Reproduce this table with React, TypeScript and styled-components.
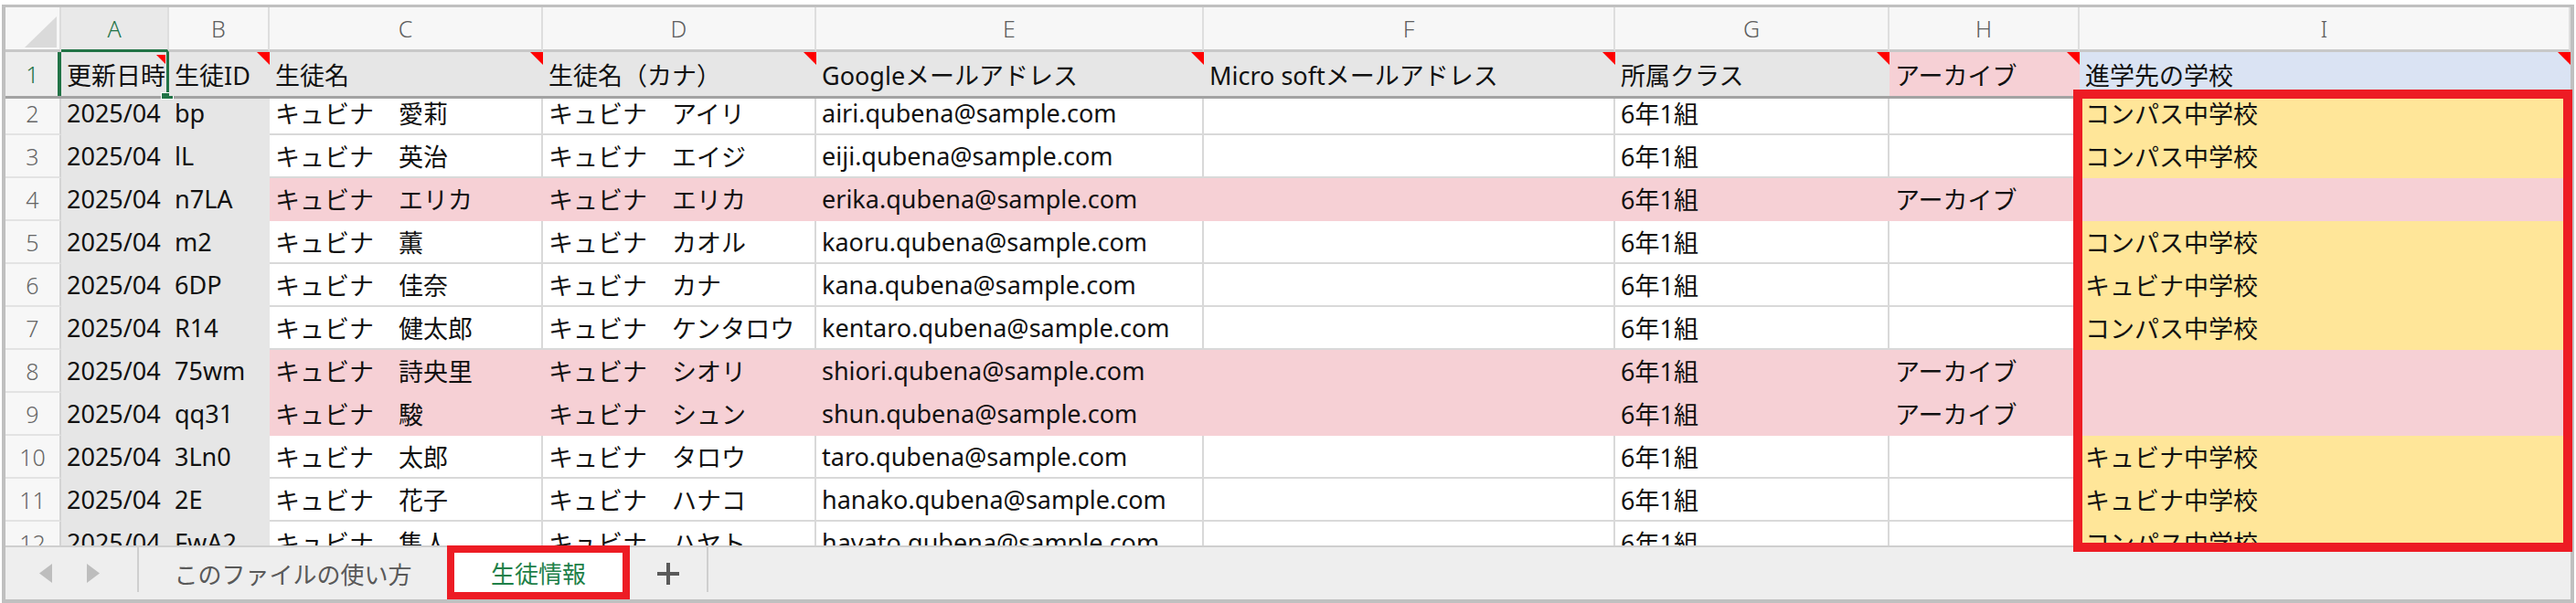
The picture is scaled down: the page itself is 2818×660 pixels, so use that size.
import React from 'react';
import styled, { createGlobalStyle } from 'styled-components';

const COLS = '61px 118px 110px 299px 299px 424px 450px 300px 208px 537px';
const FONT = `"Noto Sans", "Noto Sans CJK JP", sans-serif`;

const GRAY = '#e6e6e6';
const PINK = '#f6d0d5';
const YELLOW = '#ffe699';
const BLUE = '#dae3f3';
const LINE = '#d9d9d9';
const GREEN = '#217346';
const RED = '#ed1c24';

const GlobalStyle = createGlobalStyle`
  html, body { margin: 0; padding: 0; background: #ffffff; }
  body { font-family: ${FONT}; color: #111111; }
  *, *::before, *::after { box-sizing: border-box; }
`;

const Frame = styled.div`
  position: relative;
  margin: 5px 0 0 2px;
  width: 2814px;
  height: 655px;
  border: 4px solid #c0c0c0;
  border-top-width: 3px;
  display: flex;
  flex-direction: column;
  background: #ffffff;
`;

const GridRow = styled.div<{ $h: number }>`
  display: grid;
  grid-template-columns: ${COLS};
  height: ${(p) => p.$h}px;
  flex: none;
`;

const HeaderRow = styled(GridRow)`
  border-bottom: 3px solid #a3a3a3;
`;

const Corner = styled.div`
  display: flex;
  align-items: flex-end;
  justify-content: flex-end;
  padding: 0 3px 2px 0;
  background: #f7f7f7;
  border-right: 2px solid #dcdcdc;
  border-bottom: 3px solid #c8c8c8;
`;

const ColLetter = styled.div<{ $active?: boolean }>`
  display: flex;
  align-items: center;
  justify-content: center;
  font-family: "Noto Sans", sans-serif;
  font-weight: 300;
  font-size: 25px;
  color: ${(p) => (p.$active ? GREEN : '#5e5e5e')};
  background: ${(p) => (p.$active ? '#e9e9e9' : '#f7f7f7')};
  border-right: 2px solid #dedede;
  border-bottom: 3px solid ${(p) => (p.$active ? GREEN : '#c8c8c8')};
`;

const RowNum = styled.div<{ $active?: boolean; $line?: boolean }>`
  display: flex;
  align-items: center;
  justify-content: center;
  font-family: "Noto Sans", sans-serif;
  font-weight: 300;
  font-size: 25px;
  color: ${(p) => (p.$active ? GREEN : '#666666')};
  background: ${(p) => (p.$active ? '#ededed' : '#f7f7f7')};
  border-right: 2px solid #d4d4d4;
  border-bottom: ${(p) => (p.$line ? '2px solid #e3e3e3' : 'none')};
`;

const HeadCell = styled.div<{ $fill: string }>`
  position: relative;
  display: flex;
  align-items: center;
  padding-left: 6px;
  font-size: 27px;
  white-space: nowrap;
  background: ${(p) => p.$fill};
`;

const CommentMark = styled.span<{ $size?: number; $inset?: number }>`
  position: absolute;
  top: ${(p) => (p.$inset ? 3 : 0)}px;
  right: ${(p) => p.$inset ?? 0}px;
  width: 0;
  height: 0;
  border-top: ${(p) => p.$size ?? 14}px solid #ff0000;
  border-left: ${(p) => p.$size ?? 14}px solid transparent;
`;

const Selection = styled.span`
  position: absolute;
  top: 0;
  bottom: 0;
  left: -4px;
  right: -2px;
  border-left: 4px solid ${GREEN};
  border-right: 5px solid ${GREEN};
  pointer-events: none;
`;

const FillHandle = styled.span`
  position: absolute;
  right: -7px;
  bottom: -3px;
  width: 12px;
  height: 6px;
  background: ${GREEN};
  outline: 1px solid #ffffff;
`;

const Viewport = styled.div`
  flex: 1;
  overflow: hidden;
`;

const RowStack = styled.div`
  margin-top: -7px;
`;

const Cell = styled.div<{ $fill?: string }>`
  display: flex;
  align-items: center;
  padding-left: 6px;
  font-size: 27px;
  white-space: nowrap;
  overflow: hidden;
  background: ${(p) => p.$fill ?? '#ffffff'};
  border-right: 2px solid ${(p) => p.$fill ?? LINE};
  border-bottom: 2px solid ${(p) => p.$fill ?? LINE};
`;

const TabBar = styled.div`
  flex: none;
  height: 59px;
  display: flex;
  align-items: stretch;
  background: #eeeeee;
  border-top: 2px solid #cfcfcf;
`;

const Nav = styled.div`
  width: 144px;
  display: flex;
  align-items: center;
  gap: 38px;
  padding-left: 37px;
`;

const Separator = styled.div`
  width: 2px;
  background: #cfcfcf;
  margin-bottom: 8px;
`;

const Tab = styled.div<{ $active?: boolean; $w: number }>`
  width: ${(p) => p.$w}px;
  display: flex;
  align-items: center;
  justify-content: center;
  font-size: 26px;
  color: ${(p) => (p.$active ? '#1e8048' : '#595959')};
  background: ${(p) => (p.$active ? '#ffffff' : 'transparent')};
  border: ${(p) => (p.$active ? `8px solid ${RED}` : 'none')};
  margin-top: ${(p) => (p.$active ? -2 : 0)}px;
  height: ${(p) => (p.$active ? 'calc(100% + 2px)' : 'auto')};
`;

const AddTab = styled.div`
  width: 84px;
  display: flex;
  align-items: center;
  justify-content: center;
`;

const Highlight = styled.div`
  position: absolute;
  left: 2262px;
  top: 90px;
  width: 546px;
  height: 506px;
  border: 10px solid ${RED};
  pointer-events: none;
`;

type Row = {
  n: number;
  id: string;
  name: string;
  kana: string;
  mail: string;
  archived?: boolean;
  school?: string;
};

const rows: Row[] = [
  { n: 2, id: 'bp', name: 'キュビナ　愛莉', kana: 'キュビナ　アイリ', mail: 'airi.qubena@sample.com', school: 'コンパス中学校' },
  { n: 3, id: 'lL', name: 'キュビナ　英治', kana: 'キュビナ　エイジ', mail: 'eiji.qubena@sample.com', school: 'コンパス中学校' },
  { n: 4, id: 'n7LA', name: 'キュビナ　エリカ', kana: 'キュビナ　エリカ', mail: 'erika.qubena@sample.com', archived: true },
  { n: 5, id: 'm2', name: 'キュビナ　薫', kana: 'キュビナ　カオル', mail: 'kaoru.qubena@sample.com', school: 'コンパス中学校' },
  { n: 6, id: '6DP', name: 'キュビナ　佳奈', kana: 'キュビナ　カナ', mail: 'kana.qubena@sample.com', school: 'キュビナ中学校' },
  { n: 7, id: 'R14', name: 'キュビナ　健太郎', kana: 'キュビナ　ケンタロウ', mail: 'kentaro.qubena@sample.com', school: 'コンパス中学校' },
  { n: 8, id: '75wm', name: 'キュビナ　詩央里', kana: 'キュビナ　シオリ', mail: 'shiori.qubena@sample.com', archived: true },
  { n: 9, id: 'qq31', name: 'キュビナ　駿', kana: 'キュビナ　シュン', mail: 'shun.qubena@sample.com', archived: true },
  { n: 10, id: '3Ln0', name: 'キュビナ　太郎', kana: 'キュビナ　タロウ', mail: 'taro.qubena@sample.com', school: 'キュビナ中学校' },
  { n: 11, id: '2E', name: 'キュビナ　花子', kana: 'キュビナ　ハナコ', mail: 'hanako.qubena@sample.com', school: 'キュビナ中学校' },
  { n: 12, id: 'FwA2', name: 'キュビナ　隼人', kana: 'キュビナ　ハヤト', mail: 'hayato.qubena@sample.com', school: 'コンパス中学校' },
];

const letters = ['A', 'B', 'C', 'D', 'E', 'F', 'G', 'H', 'I'];

const headers: { text: string; fill: string }[] = [
  { text: '更新日時', fill: GRAY },
  { text: '生徒ID', fill: GRAY },
  { text: '生徒名', fill: GRAY },
  { text: '生徒名（カナ）', fill: GRAY },
  { text: 'Googleメールアドレス', fill: GRAY },
  { text: 'Micro softメールアドレス', fill: GRAY },
  { text: '所属クラス', fill: GRAY },
  { text: 'アーカイブ', fill: PINK },
  { text: '進学先の学校', fill: BLUE },
];

const CornerTriangle = () => (
  <svg width="35" height="34" viewBox="0 0 35 34">
    <polygon points="35,0 35,34 0,34" fill="#dadada" />
  </svg>
);

const ArrowLeft = () => (
  <svg width="14" height="21" viewBox="0 0 14 21">
    <polygon points="14,0 14,21 0,10.5" fill="#bdbdbd" />
  </svg>
);

const ArrowRight = () => (
  <svg width="14" height="21" viewBox="0 0 14 21">
    <polygon points="0,0 14,10.5 0,21" fill="#bdbdbd" />
  </svg>
);

const PlusIcon = () => (
  <svg width="24" height="24" viewBox="0 0 24 24">
    <rect x="10" y="0" width="4" height="24" fill="#5a5a5a" />
    <rect x="0" y="10" width="24" height="4" fill="#5a5a5a" />
  </svg>
);

export default function App() {
  return (
    <>
      <GlobalStyle />
      <Frame>
        <GridRow $h={49}>
          <Corner>
            <CornerTriangle />
          </Corner>
          {letters.map((l, i) => (
            <ColLetter key={l} $active={i === 0}>
              {l}
            </ColLetter>
          ))}
        </GridRow>

        <HeaderRow $h={51}>
          <RowNum $active>1</RowNum>
          {headers.map((h, i) => (
            <HeadCell key={h.text} $fill={h.fill}>
              {h.text}
              {i === 0 ? (
                <>
                  <CommentMark $size={10} $inset={4} />
                  <Selection>
                    <FillHandle />
                  </Selection>
                </>
              ) : (
                <CommentMark />
              )}
            </HeadCell>
          ))}
        </HeaderRow>

        <Viewport>
          <RowStack>
            {rows.map((r) => {
              const band = r.archived ? PINK : undefined;
              return (
                <GridRow $h={47} key={r.n}>
                  <RowNum $line>{r.n}</RowNum>
                  <Cell $fill={GRAY}>2025/04</Cell>
                  <Cell $fill={GRAY}>{r.id}</Cell>
                  <Cell $fill={band}>{r.name}</Cell>
                  <Cell $fill={band}>{r.kana}</Cell>
                  <Cell $fill={band}>{r.mail}</Cell>
                  <Cell $fill={band} />
                  <Cell $fill={band}>6年1組</Cell>
                  <Cell $fill={band}>{r.archived ? 'アーカイブ' : ''}</Cell>
                  <Cell $fill={r.archived ? PINK : YELLOW}>{r.school ?? ''}</Cell>
                </GridRow>
              );
            })}
          </RowStack>
        </Viewport>

        <TabBar>
          <Nav>
            <ArrowLeft />
            <ArrowRight />
          </Nav>
          <Separator />
          <Tab $w={337}>このファイルの使い方</Tab>
          <Tab $w={200} $active>
            生徒情報
          </Tab>
          <AddTab>
            <PlusIcon />
          </AddTab>
          <Separator />
        </TabBar>

        <Highlight />
      </Frame>
    </>
  );
}
